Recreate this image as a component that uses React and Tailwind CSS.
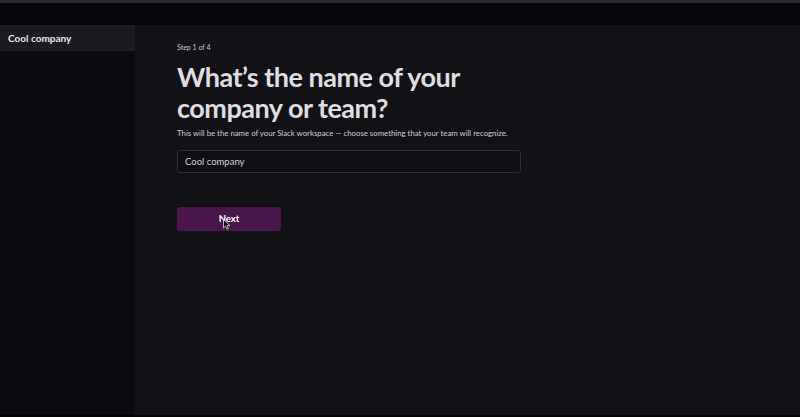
import { useState } from 'react';

// Cursor arrow drawn over the Next button
function Pointer() {
  return (
    <svg width="8" height="11" viewBox="0 0 8 11" className="absolute left-[46px] top-[12px]">
      <path d="M0.5 0.5 L0.5 9 L2.6 7.1 L4 10.3 L5.4 9.7 L4.1 6.6 L7 6.6 Z" fill="#111" stroke="#ddd" strokeWidth="0.8" />
    </svg>
  );
}

export default function App() {
  const [name, setName] = useState('Cool company');

  return (
    <div className="w-[800px] h-[417px] flex flex-col bg-[#030205] font-['Lato','Noto_Sans',sans-serif] overflow-hidden">
      <div className="h-[3px] bg-[#2a292f]" />
      <div className="h-[22px] bg-[#06050b]" />

      <div className="flex flex-1 min-h-0">
        {/* Sidebar */}
        <aside className="w-[135px] bg-[#0b0a11] flex flex-col">
          <div className="h-[26px] bg-[#1c1b21] flex items-center px-2">
            <span className="text-[10px] font-bold text-[#e8e8ea]">Cool company</span>
          </div>
        </aside>

        {/* Main */}
        <main className="flex-1 bg-[#121116] pl-[42px] pt-[16px]">
          <p className="text-[7px] text-[#c9c9cc] leading-[12px]">Step 1 of 4</p>
          <h1 className="mt-[8px] text-[27px] leading-[31px] font-bold tracking-[-0.5px] text-[#dfdee1] whitespace-nowrap">
            What’s the name of your<br />company or team?
          </h1>
          <p className="mt-[4px] text-[7.8px] text-[#cfcfd2] leading-[12px]">
            This will be the name of your Slack workspace — choose something that your team will recognize.
          </p>
          <input
            value={name}
            onChange={e => setName(e.target.value)}
            className="mt-[11px] w-[344px] h-[23px] rounded-[3px] border border-[#302f35] bg-[#0f0e13] px-[7px] text-[9.5px] text-[#d4d4d7] outline-none"
          />
          <div className="mt-[31px]">
            <button className="relative w-[104px] h-[24px] rounded-[3px] bg-[#4a154b] text-white text-[9.5px] font-bold">
              Next
              <Pointer />
            </button>
          </div>
        </main>
      </div>
      <div className="h-[2px] bg-[#030205]" />
    </div>
  );
}
